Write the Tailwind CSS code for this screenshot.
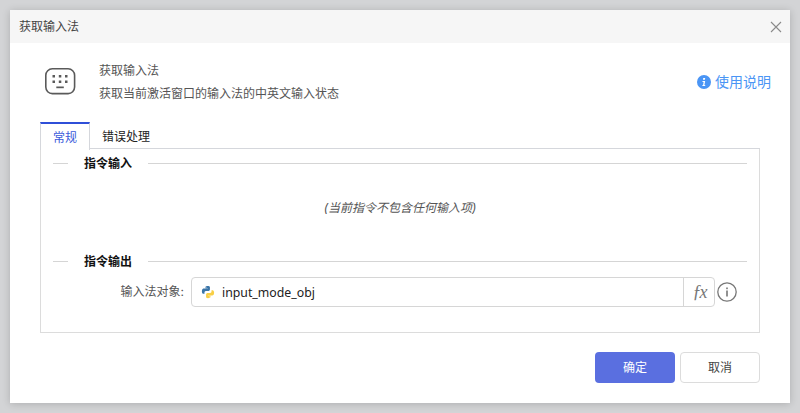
<!DOCTYPE html>
<html lang="zh-CN">
<head>
  <meta charset="UTF-8">
  <title>获取输入法</title>
  <script src="https://cdn.jsdelivr.net/npm/@tailwindcss/browser@4"></script>
</head>
<body class="w-[800px] h-[413px] overflow-hidden bg-[#d3d4d6] pt-[10px] pl-[10px] font-['Inter','Noto_Sans_CJK_SC',sans-serif] text-xs">

  <div class="w-[780px] h-[393px] bg-white shadow-[0_1px_8px_rgba(0,0,0,0.18)] flex flex-col">
    <!-- title bar -->
    <div class="h-[33px] bg-[#f6f6f6] flex items-center justify-between pl-[9px] pr-[8px] text-[#444]">
      <span>获取输入法</span>
      <svg class="w-[12px] h-[12px]" viewBox="0 0 12 12" fill="none" stroke="#8a8a8a" stroke-width="1.1"><path d="M1 1l10 10M11 1L1 11"/></svg>
    </div>

    <!-- header -->
    <div class="h-[79px] flex pl-[34px] pr-[19px] pt-[14px]">
      <svg class="w-[32px] h-[28px] mt-[11px] shrink-0" viewBox="0 0 32 28" fill="none">
        <rect x="1.8" y="0.8" width="28.8" height="24.800" rx="6.500" stroke="#5a5a5a" stroke-width="1.6"/>
        <g fill="#5a5a5a">
          <rect x="8.500" y="7" width="2.500" height="2.500"/><rect x="14.800" y="7" width="2.500" height="2.500"/><rect x="21" y="7" width="2.500" height="2.500"/>
          <rect x="8.500" y="12.500" width="2.500" height="2.500"/><rect x="14.800" y="12.500" width="2.500" height="2.500"/><rect x="21" y="12.500" width="2.500" height="2.500"/>
          <rect x="12.300" y="18.500" width="7.500" height="1.700"/>
        </g>
      </svg>
      <div class="ml-[23px] text-[#555]">
        <div class="h-[18px] leading-[18px] mt-[5px]">获取输入法</div>
        <div class="h-[18px] leading-[18px] mt-[5px]">获取当前激活窗口的输入法的中英文输入状态</div>
      </div>
      <div class="ml-auto flex items-center gap-[4px] h-[20px] mt-[15px] text-sm text-[#4a95f5]">
        <svg class="w-[14px] h-[14px]" viewBox="0 0 14 14"><circle cx="7" cy="7" r="7" fill="#4a95f5"/><path d="M6.200 3h2l-.3 1.800H6zM5.600 6h2.600L7.400 10h.9l-.2 1H5.300l.2-1h.6l.5-3h-1.200z" fill="#fff"/></svg>
        <span>使用说明</span>
      </div>
    </div>

    <!-- tabs -->
    <div class="mx-[30px] flex h-[27px]">
      <div class="w-[50px] h-[28px] pt-[1px] border-t-2 border-t-[#2f4fd8] border-l border-r border-[#d5d7dc] bg-white text-[#3b5bdb] flex items-center justify-center relative z-10">常规</div>
      <div class="w-[72px] h-[27px] pt-[3px] flex items-center justify-center text-[#222] border-b border-[#d5d7dc]">错误处理</div>
      <div class="flex-1 h-[27px] border-b border-[#d5d7dc]"></div>
    </div>

    <!-- panel -->
    <div class="mx-[30px] h-[184px] border border-t-0 border-[#dcdcdc] px-[12px] pt-[5px] flex flex-col">
      <div class="flex items-center h-[18px]">
        <div class="w-[15px] h-px bg-[#d5d5d5]"></div>
        <span class="ml-[16px] pt-[2px] font-bold text-[#111]">指令输入</span>
        <div class="ml-[16px] flex-1 h-px bg-[#d5d5d5]"></div>
      </div>
      <div class="h-[80px] pb-[8px] flex items-center justify-center italic text-[#555]">(当前指令不包含任何输入项)</div>
      <div class="flex items-center h-[18px]">
        <div class="w-[15px] h-px bg-[#d5d5d5]"></div>
        <span class="ml-[16px] pt-[2px] font-bold text-[#111]">指令输出</span>
        <div class="ml-[16px] flex-1 h-px bg-[#d5d5d5]"></div>
      </div>
      <div class="flex items-center mt-[7px] h-[30px]">
        <label class="w-[138px] text-right text-[#555] pr-[7px]">输入法对象:</label>
        <div class="w-[524px] h-[30px] border border-[#d6d6d6] rounded-[4px] flex items-center">
          <svg class="w-[14px] h-[14px] ml-[9px]" viewBox="0 0 16 16">
            <path fill="#3a75a8" d="M7.900 1C5 1 5.200 2.300 5.200 2.300V3.700H8V4.100H3.100S1 3.900 1 7.100s1.800 3 1.800 3H4V8.600s-.1-1.800 1.800-1.800h2.700s1.700 0 1.700-1.700V2.700S10.500 1 7.900 1zM6.400 1.900a.5.5 0 1 1 0 1 .5.5 0 0 1 0-1z"/>
            <path fill="#f8cf45" d="M8.100 15c2.900 0 2.700-1.300 2.700-1.300V12.300H8v-.4h4.900s2.100.2 2.100-3-1.800-3-1.800-3H12v1.500s.1 1.800-1.800 1.800H7.500s-1.700 0-1.700 1.700v2.400S5.500 15 8.100 15zm1.500-.9a.5.5 0 1 1 0-1 .5.5 0 0 1 0 1z"/>
          </svg>
          <span class="ml-[7px] pt-[2px] text-[12.300px] text-[#222] font-['Noto_Sans',sans-serif]">input_mode_obj</span>
          <div class="ml-auto w-[31px] h-full border-l border-[#d6d6d6] flex items-center justify-center">
            <span class="text-[#777] text-[18px] italic tracking-[-2px] font-['Liberation_Serif',serif] leading-none">ƒx</span>
          </div>
        </div>
        <svg class="w-[20px] h-[20px] ml-[2px]" viewBox="0 0 20 20" fill="none">
          <circle cx="10" cy="10" r="9.200" stroke="#777" stroke-width="1.300"/>
          <rect x="9.200" y="8.500" width="1.600" height="6" fill="#777"/>
          <rect x="9.200" y="5.500" width="1.600" height="1.700" fill="#777"/>
        </svg>
      </div>
    </div>

    <!-- footer -->
    <div class="mx-[30px] mt-[19px] flex justify-end gap-[5px]">
      <button class="w-[80px] h-[31px] rounded-[4px] bg-[#5a6fe0] text-white">确定</button>
      <button class="w-[80px] h-[31px] rounded-[4px] border border-[#dcdcdc] bg-white text-[#444]">取消</button>
    </div>
  </div>

</body>
</html>
